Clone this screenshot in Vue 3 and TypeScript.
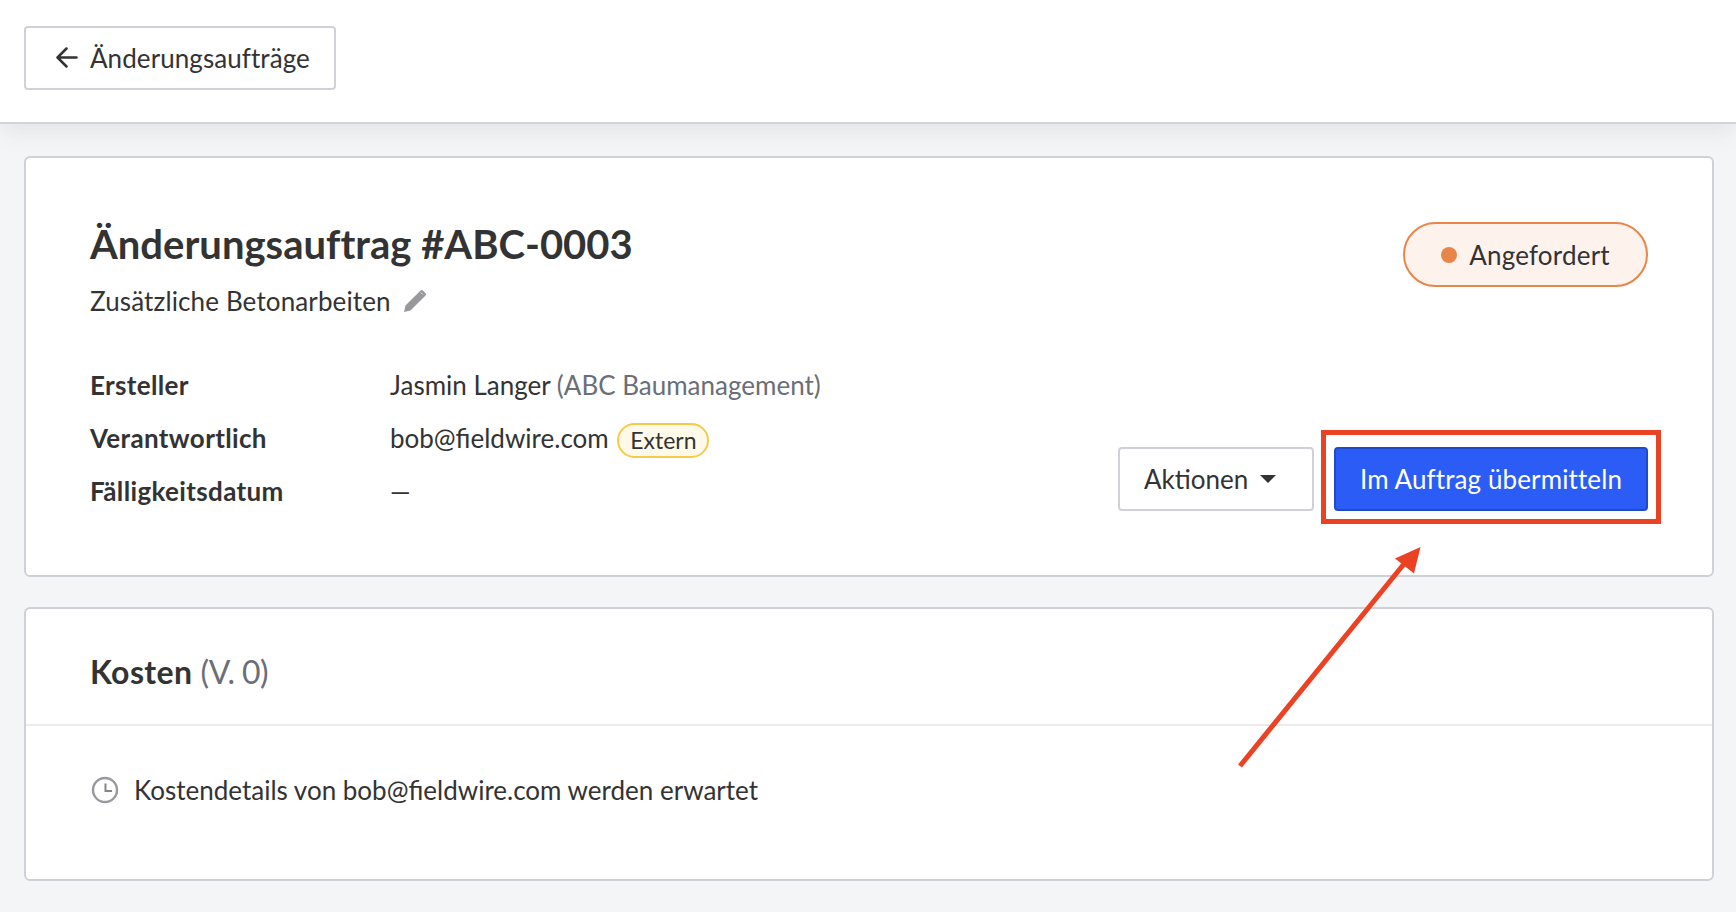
<script setup lang="ts">
interface Row { label: string }
const labels: Row[] = [{ label: 'Ersteller' }, { label: 'Verantwortlich' }, { label: 'Fälligkeitsdatum' }]
</script>

<template>
  <div class="page">
    <header class="topbar">
      <button class="btn back">
        <svg class="arrow" width="22" height="22" viewBox="0 0 22 22" fill="none" stroke="#333" stroke-width="2.5" stroke-linecap="round" stroke-linejoin="round">
          <path d="M20.500 10.500H1.500M10.500 1.500 1.500 10.500l9 9" />
        </svg>
        <span>Änderungsaufträge</span>
      </button>
    </header>

    <main class="content">
      <section class="card summary">
        <div class="head">
          <div>
            <h1>Änderungsauftrag #ABC-0003</h1>
            <div class="subtitle">
              <span>Zusätzliche Betonarbeiten</span>
              <svg width="22" height="22" viewBox="0 0 22 22">
                <path d="M0 22l1.500-6.500L16.300 .7a2 2 0 0 1 2.800 0l2.200 2.200a2 2 0 0 1 0 2.800L6.500 20.500z" fill="#98989d" />
                <path d="M16.800 2.600l1.800 1.800" stroke="#fff" stroke-width="1" fill="none" opacity=".75" />
              </svg>
            </div>
          </div>
          <div class="status"><i class="dot"></i>Angefordert</div>
        </div>

        <div class="foot">
          <div class="details">
            <div class="label">{{ labels[0].label }}</div>
            <div class="value">Jasmin Langer <span class="muted">(ABC Baumanagement)</span></div>
            <div class="label">{{ labels[1].label }}</div>
            <div class="value">bob@fieldwire.com <span class="badge">Extern</span></div>
            <div class="label">{{ labels[2].label }}</div>
            <div class="value">—</div>
          </div>
          <div class="actions">
            <button class="btn menu">Aktionen<i class="caret"></i></button>
            <button class="btn primary">Im Auftrag übermitteln</button>
          </div>
        </div>
      </section>

      <section class="card costs">
        <h2>Kosten <span class="muted version">(V. 0)</span></h2>
        <div class="pending">
          <svg width="28" height="28" viewBox="0 0 28 28" fill="none" stroke="#98989d" stroke-width="2.400">
            <circle cx="14" cy="14" r="12" />
            <path d="M14.500 7.500V15H21" stroke="#85858a" stroke-width="2" />
          </svg>
          <span>Kostendetails von bob@fieldwire.com werden erwartet</span>
        </div>
      </section>
    </main>

    <div class="redbox"></div>
    <svg class="annot" width="1736" height="912" viewBox="0 0 1736 912">
      <path d="M1240 766 1408 559" stroke="#ec4224" stroke-width="5" fill="none" />
      <path d="M1420.500 547 1395 558.500 1414 573.500z" fill="#ec4224" />
    </svg>
  </div>
</template>

<style scoped>
.page {
  position: relative;
  height: 912px;
  overflow: hidden;
  background: #f4f5f7;
  color: #333;
  font-family: Lato, "Liberation Sans", sans-serif;
  font-size: 26px;
}
.topbar {
  box-sizing: content-box;
  padding: 26px 24px 0;
  height: 96px;
  background: #fff;
  border-bottom: 2px solid #d3d4d8;
  box-shadow: 0 6px 24px rgba(60, 64, 72, 0.1);
  position: relative;
}
.btn {
  display: inline-flex;
  align-items: center;
  box-sizing: border-box;
  height: 64px;
  border: 2px solid #d0d1d6;
  border-radius: 4px;
  background: #fff;
  color: #333;
  font: inherit;
  padding: 0;
}
.back { width: 312px; padding-left: 30px; gap: 12px; letter-spacing: 0.07px; }
.content {
  padding: 32px 22px 0 24px;
  display: flex;
  flex-direction: column;
  gap: 30px;
}
.card {
  box-sizing: border-box;
  background: #fff;
  border: 2px solid #d0d1d6;
  border-radius: 6px;
}
.summary { height: 421px; padding: 62px 64px 0; }
.head { display: flex; justify-content: space-between; align-items: flex-start; }
h1 { margin: 0; font-size: 40px; line-height: 48px; font-weight: 700; letter-spacing: 0.01px; }
.subtitle { display: flex; align-items: center; gap: 13px; margin-top: 17px; line-height: 32px; letter-spacing: 0.13px; }
.status {
  box-sizing: border-box;
  width: 245px;
  height: 65px;
  margin-top: 2px;
  display: flex;
  align-items: center;
  justify-content: center;
  gap: 12px;
  letter-spacing: 0.2px;
  border: 2px solid #e8854a;
  border-radius: 33px;
  background: #fdf2ec;
}
.dot { width: 16px; height: 16px; border-radius: 50%; background: #e8854a; }
.foot { display: flex; justify-content: space-between; align-items: flex-end; margin-top: 41px; }
.details {
  display: grid;
  grid-template-columns: 300px auto;
  grid-auto-rows: 53px;
  align-items: center;
}
.label { font-weight: 700; letter-spacing: 0.35px; }
.muted { color: #6b6e76; font-weight: 400; }
.badge {
  display: inline-block;
  box-sizing: border-box;
  height: 35px;
  width: 92px;
  margin: -6px 0 -6px 2px;
  line-height: 31px;
  text-align: center;
  font-size: 23px;
  vertical-align: -1px;
  border: 2px solid #f6cb4a;
  border-radius: 18px;
  background: #fef9e8;
}
.actions { display: flex; gap: 20px; margin-bottom: 6px; }
.menu { width: 196px; padding-left: 24px; }
.caret {
  width: 0;
  height: 0;
  margin-left: 12px;
  border-left: 8px solid transparent;
  border-right: 8px solid transparent;
  border-top: 8px solid #333;
}
.primary {
  width: 314px;
  justify-content: center;
  letter-spacing: 0.11px;
  color: #fff;
  background: #2b5cf6;
  border-color: #1f4bc8;
}
.costs { height: 274px; }
h2 {
  margin: 0;
  box-sizing: border-box;
  height: 117px;
  padding: 0 64px;
  font-size: 32px;
  line-height: 126px;
  font-weight: 700;
  letter-spacing: 0.37px;
  border-bottom: 2px solid #ececee;
}
.version { letter-spacing: -0.55px; }
.pending {
  display: flex;
  align-items: center;
  gap: 15px;
  padding: 48px 0 0 65px;
}
.redbox {
  position: absolute;
  left: 1321px;
  top: 430px;
  width: 340px;
  height: 94px;
  box-sizing: border-box;
  border: 5px solid #ec4224;
}
.annot { position: absolute; left: 0; top: 0; pointer-events: none; }
</style>
